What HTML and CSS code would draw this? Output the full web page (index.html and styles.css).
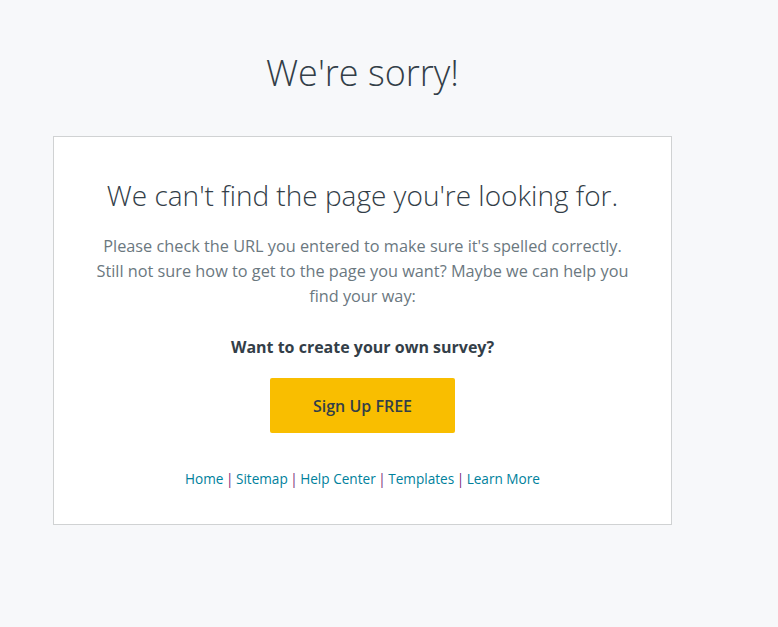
FILE: index.html
```html
<!DOCTYPE html>
<html>
<head>
<meta charset="utf-8">
<link rel="stylesheet" href="styles.css">
</head>
<body>
<main class="page">
  <h1 class="title">We're sorry!</h1>
  <section class="card">
    <h2 class="subtitle">We can't find the page you're looking for.</h2>
    <p class="message">Please check the URL you entered to make sure it's spelled correctly. Still not sure how to get to the page you want? Maybe we can help you find your way:</p>
    <p class="cta-label">Want to create your own survey?</p>
    <a class="cta-button" href="#">Sign Up FREE</a>
    <nav class="links">
      <a href="#">Home</a><span class="sep">|</span><a href="#">Sitemap</a><span class="sep">|</span><a href="#">Help Center</a><span class="sep">|</span><a href="#">Templates</a><span class="sep">|</span><a href="#">Learn More</a>
    </nav>
  </section>
</main>
</body>
</html>
```
FILE: styles.css
```css
html, body {
  margin: 0;
  padding: 0;
  background: #f7f8fa;
}
body {
  font-family: "Open Sans", "Noto Sans", sans-serif;
  color: #333e48;
}
.page {
  width: 619px;
  margin-left: 53px;
  padding-top: 50px;
  display: flex;
  flex-direction: column;
  align-items: center;
}
.title {
  margin: 0;
  font-weight: 300;
  font-size: 36px;
  line-height: 46px;
  color: #333e48;
}
.card {
  box-sizing: border-box;
  margin-top: 40px;
  width: 619px;
  height: 389px;
  background: #fff;
  border: 1px solid #d0d2d3;
  display: flex;
  flex-direction: column;
  align-items: center;
  padding: 38px 40px 0;
  text-align: center;
}
.subtitle {
  margin: 0;
  font-weight: 300;
  font-size: 28px;
  line-height: 40px;
  color: #333e48;
}
.message {
  margin: 19px 0 0;
  font-size: 16.3px;
  line-height: 25px;
  color: #6b787f;
}
.cta-label {
  margin: 26px 0 0;
  font-size: 16px;
  font-weight: 700;
  line-height: 24px;
  color: #333e48;
}
.cta-button {
  margin-top: 19px;
  width: 185px;
  height: 55px;
  display: flex;
  align-items: center;
  justify-content: center;
  background: #f9be00;
  border-radius: 2px;
  color: #333e48;
  font-weight: 600;
  font-size: 16px;
  text-decoration: none;
}
.links {
  margin-top: 36px;
  font-size: 13.6px;
  line-height: 20px;
}
.links a {
  color: #00819c;
  text-decoration: none;
}
.sep {
  color: #7a2a7a;
  margin: 0 2.5px;
}
```
